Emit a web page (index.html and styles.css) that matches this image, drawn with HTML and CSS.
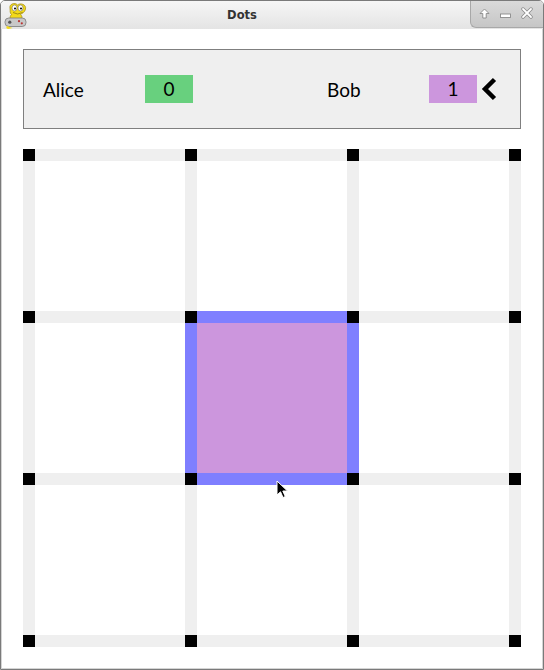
FILE: index.html
```html
<!DOCTYPE html>
<html>
<head>
<meta charset="utf-8">
<link rel="stylesheet" href="styles.css">
</head>
<body>
<div class="window">
  <div class="titlebar">
    <div class="logo">
      <svg width="24" height="26" viewBox="0 0 24 26">
        <path d="M6 5 C5 1 11 -1 13.5 2 C16.5 -0.5 22.5 1.5 21.5 6 C21 9.5 17.5 10.5 16.5 11.5 C19 13.5 18 17 15.5 18 L8.5 18 C5.5 17 5.5 13.5 7.5 11.5 C5.5 10 6.5 8 6 5 Z" fill="#f2d91a" stroke="#a89220" stroke-width="0.8"/>
        <ellipse cx="10.5" cy="5" rx="2.5" ry="3" fill="#fff" stroke="#555" stroke-width="0.5"/>
        <ellipse cx="16.5" cy="5" rx="2.5" ry="3" fill="#fff" stroke="#555" stroke-width="0.5"/>
        <circle cx="11" cy="5.5" r="1" fill="#000"/>
        <circle cx="17" cy="5.5" r="1" fill="#000"/>
        <path d="M9 9.5 Q13.5 12.5 18.5 9.5" fill="none" stroke="#8a7a10" stroke-width="0.8"/>
        <rect x="1" y="15" width="21" height="8.5" rx="3.8" fill="#c8c8c8" stroke="#7a7a7a" stroke-width="0.8"/>
        <circle cx="5.8" cy="19.2" r="1.6" fill="#555"/>
        <circle cx="15" cy="18.2" r="1.1" fill="#b33"/>
        <circle cx="17.8" cy="20.3" r="1.1" fill="#b33"/>
        <path d="M3 23 Q1 25.5 4.5 26 L8.5 25 Z" fill="#f2d91a"/>
      </svg>
    </div>
    <div class="title">Dots</div>
    <div class="buttons">
      <svg class="btn" width="11" height="11" viewBox="0 0 11 11">
        <path d="M5.5 1 L10 5.5 L7.2 5.5 L7.2 10 L3.8 10 L3.8 5.5 L1 5.5 Z" fill="#fff" stroke="#8a8a8a" stroke-width="0.9" stroke-linejoin="round"/>
      </svg>
      <svg class="btn" width="11" height="11" viewBox="0 0 11 11">
        <rect x="0.5" y="6" width="10" height="3.5" fill="#fff" stroke="#8a8a8a" stroke-width="0.9"/>
      </svg>
      <svg class="btn" width="12" height="12" viewBox="0 0 12 12">
        <path d="M2 2 L10 10 M10 2 L2 10" stroke="#8a8a8a" stroke-width="3.4" stroke-linecap="round"/>
        <path d="M2 2 L10 10 M10 2 L2 10" stroke="#fff" stroke-width="1.8" stroke-linecap="round"/>
      </svg>
    </div>
  </div>
  <div class="content">
    <div class="scores">
      <div class="player p1">
        <span class="name">Alice</span>
        <span class="score green">0</span>
      </div>
      <div class="player p2">
        <span class="name">Bob</span>
        <span class="score purple">1</span>
        <svg class="turn" width="16" height="24" viewBox="0 0 16 24">
          <polyline points="13.5,2.5 4,12 13.5,21.5" fill="none" stroke="#000" stroke-width="4.5" stroke-linejoin="miter"/>
        </svg>
      </div>
    </div>
    <div class="board">
      <div class="d"></div><div class="h"></div><div class="d"></div><div class="h"></div><div class="d"></div><div class="h"></div><div class="d"></div>
      <div class="v"></div><div class="c"></div><div class="v"></div><div class="c"></div><div class="v"></div><div class="c"></div><div class="v"></div>
      <div class="d"></div><div class="h"></div><div class="d"></div><div class="h on"></div><div class="d"></div><div class="h"></div><div class="d"></div>
      <div class="v"></div><div class="c"></div><div class="v on"></div><div class="c owned"></div><div class="v on"></div><div class="c"></div><div class="v"></div>
      <div class="d"></div><div class="h"></div><div class="d"></div><div class="h on"></div><div class="d"></div><div class="h"></div><div class="d"></div>
      <div class="v"></div><div class="c"></div><div class="v"></div><div class="c"></div><div class="v"></div><div class="c"></div><div class="v"></div>
      <div class="d"></div><div class="h"></div><div class="d"></div><div class="h"></div><div class="d"></div><div class="h"></div><div class="d"></div>
    </div>
  </div>
  <svg class="cursor" width="14" height="20" viewBox="0 0 14 20">
    <path d="M1 1 L1 15 L4.5 11.8 L7 17.5 L9.3 16.5 L6.8 11 L11.5 11 Z" fill="#000" stroke="#fff" stroke-width="1"/>
  </svg>
</div>
</body>
</html>
```

FILE: styles.css
```css
html, body {
  margin: 0;
  padding: 0;
  background: #fff;
}

.window {
  position: relative;
  width: 544px;
  height: 670px;
  box-sizing: border-box;
  border: 1px solid #7a7a7a;
  border-radius: 5px 5px 0 0;
  background: #fff;
  display: flex;
  flex-direction: column;
  overflow: hidden;
}

.titlebar {
  height: 28px;
  flex: none;
  display: flex;
  align-items: stretch;
  background: linear-gradient(#f6f6f6, #e4e4e4);
}

.logo {
  width: 24px;
  padding: 2px 0 0 3px;
  flex: none;
}

.title {
  flex: 1;
  text-align: center;
  font-family: "DejaVu Sans", sans-serif;
  font-weight: bold;
  font-size: 11.5px;
  color: #333;
  line-height: 28px;
  padding-right: 14px;
}

.buttons {
  width: 73px;
  flex: none;
  display: flex;
  align-items: center;
  gap: 10px;
  padding: 0 0 2px 8px;
  box-sizing: border-box;
  height: 27px;
  background: linear-gradient(#dadada, #c6c6c6);
  border-left: 1px solid #a8a8a8;
  border-bottom: 1px solid #a8a8a8;
  border-bottom-left-radius: 6px;
}

.content {
  flex: 1;
  border: 1px solid #d4d4d4;
  border-top: none;
  padding: 20px 21px 0 21px;
  display: flex;
  flex-direction: column;
  gap: 20px;
}

.scores {
  height: 80px;
  box-sizing: border-box;
  border: 1px solid #7f7f7f;
  background: #efefef;
  display: flex;
  align-items: center;
  padding-left: 19px;
  font-family: "Lato", sans-serif;
  font-size: 19px;
  color: #000;
}

.player {
  display: flex;
  align-items: center;
}

.p1 .name {
  width: 102px;
}

.p2 {
  margin-left: 134px;
}

.p2 .name {
  width: 102px;
}

.score {
  width: 48px;
  height: 28px;
  line-height: 28px;
  text-align: center;
}

.green {
  background: #68d07e;
}

.purple {
  background: #cc96dd;
}

.turn {
  margin-left: 4px;
  display: block;
}

.board {
  display: grid;
  grid-template-columns: 12px 150px 12px 150px 12px 150px 12px;
  grid-template-rows: 12px 150px 12px 150px 12px 150px 12px;
  width: 498px;
}

.d {
  background: #000;
}

.h, .v {
  background: #efefef;
}

.h.on, .v.on {
  background: #7f7fff;
}

.c {
  background: #fff;
}

.c.owned {
  background: #cc96dd;
}

.cursor {
  position: absolute;
  left: 275px;
  top: 479px;
}
```
